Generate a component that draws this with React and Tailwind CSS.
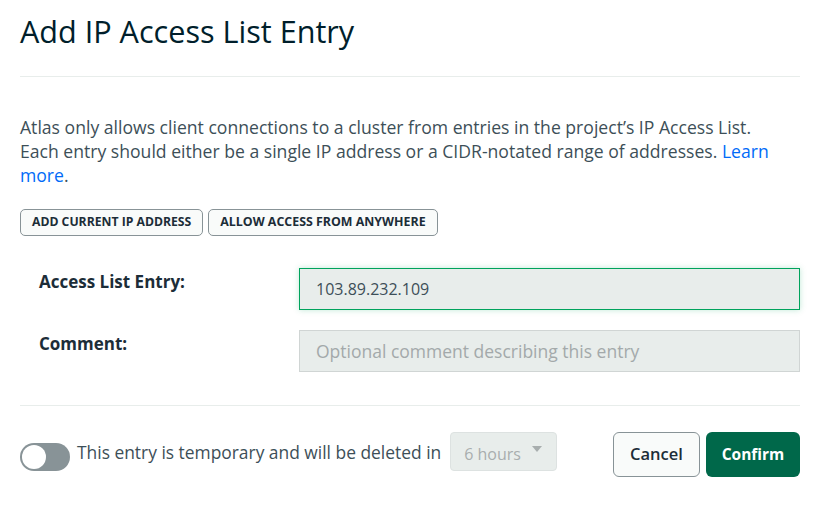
import React, { useState } from 'react';

const AddIpAccessEntry = () => {
    const [entry, setEntry] = useState('103.89.232.109');
    const [comment, setComment] = useState('');
    const [temporary, setTemporary] = useState(false);

    return (
        <div className="w-[827px] h-[508px] bg-white px-5 text-[#3d4f58]" style={{ fontFamily: '"Open Sans", sans-serif' }}>
            <h2 className="pt-[12px] pb-[26px] text-[30.6px] leading-[38px] text-[#001e2b] border-b border-[#e8edeb] w-[780px]">
                Add IP Access List Entry
            </h2>

            <p className="mt-[38px] text-[17.6px] leading-[24px] w-[780px]">
                Atlas only allows client connections to a cluster from entries in the project’s IP Access List.<br />
                Each entry should either be a single IP address or a CIDR-notated range of addresses.{' '}
                <a href="#" className="text-[#016bf8]">Learn</a><br />
                <a href="#" className="text-[#016bf8]">more</a>.
            </p>

            <div className="mt-[22px] flex gap-[5px]">
                <button className="h-[27px] px-[11px] rounded-[5px] border border-[#889397] bg-[#f9fbfa] text-[12.2px] font-bold text-[#1c2d38] uppercase">
                    Add current IP address
                </button>
                <button className="h-[27px] px-[11px] rounded-[5px] border border-[#889397] bg-[#f9fbfa] text-[12.4px] font-bold text-[#1c2d38] uppercase">
                    Allow access from anywhere
                </button>
            </div>

            <div className="mt-[32px] flex flex-col gap-[20px] w-[780px]">
                <div className="flex">
                    <label className="w-[279px] pl-[19px] pt-[1px] text-[17px] font-bold text-[#1c2d38]">Access List Entry:</label>
                    <input
                        value={entry}
                        onChange={e => setEntry(e.target.value)}
                        className="flex-1 h-[42px] px-4 bg-[#e8edeb] border border-[#00a35c] shadow-[0_0_6px_rgba(0,163,92,0.25)] text-[16px] text-[#3d4f58] outline-none"
                    />
                </div>
                <div className="flex">
                    <label className="w-[279px] pl-[19px] pt-[1px] text-[17px] font-bold text-[#1c2d38]">Comment:</label>
                    <input
                        value={comment}
                        onChange={e => setComment(e.target.value)}
                        placeholder="Optional comment describing this entry"
                        className="flex-1 h-[42px] px-4 bg-[#e8edeb] border border-[#d0d5d4] text-[17.5px] text-[#3d4f58] placeholder:text-[#a3a9aa] outline-none"
                    />
                </div>
            </div>

            <div className="mt-[33px] border-t border-[#e8edeb] w-[780px]"></div>

            <div className="mt-[26px] flex items-start w-[780px]">
                <button
                    onClick={() => setTemporary(!temporary)}
                    className="mt-[11px] w-[50px] h-[28px] rounded-full bg-[#889397] flex items-center px-[2px]"
                >
                    <span className="w-[24px] h-[24px] rounded-full bg-white"></span>
                </button>
                <span className="mt-[8px] ml-[7px] text-[17.4px] leading-[24px] text-[#3d4f58]">This entry is temporary and will be deleted in</span>
                <div className="ml-[9px] w-[107px] h-[39px] rounded-[4px] bg-[#e8edeb] border border-[#dde2e1] flex items-start justify-between pl-[13px] pr-[14px]">
                    <span className="mt-[9px] text-[16px] text-[#a8aeae]">6 hours</span>
                    <svg width="10" height="8" viewBox="0 0 10 8" className="mt-[13px]">
                        <path d="M0 0 L10 0 L5 6 Z" fill="#a8aeae" />
                    </svg>
                </div>
                <div className="ml-auto flex gap-[6px]">
                    <button className="h-[45px] w-[87px] rounded-[6px] border border-[#889397] bg-[#f9fbfa] text-[16.5px] font-semibold text-[#1c2d38]">
                        Cancel
                    </button>
                    <button className="h-[45px] w-[94px] rounded-[6px] bg-[#00684a] text-[15.5px] font-bold text-white">
                        Confirm
                    </button>
                </div>
            </div>
        </div>
    );
};

export default AddIpAccessEntry;
